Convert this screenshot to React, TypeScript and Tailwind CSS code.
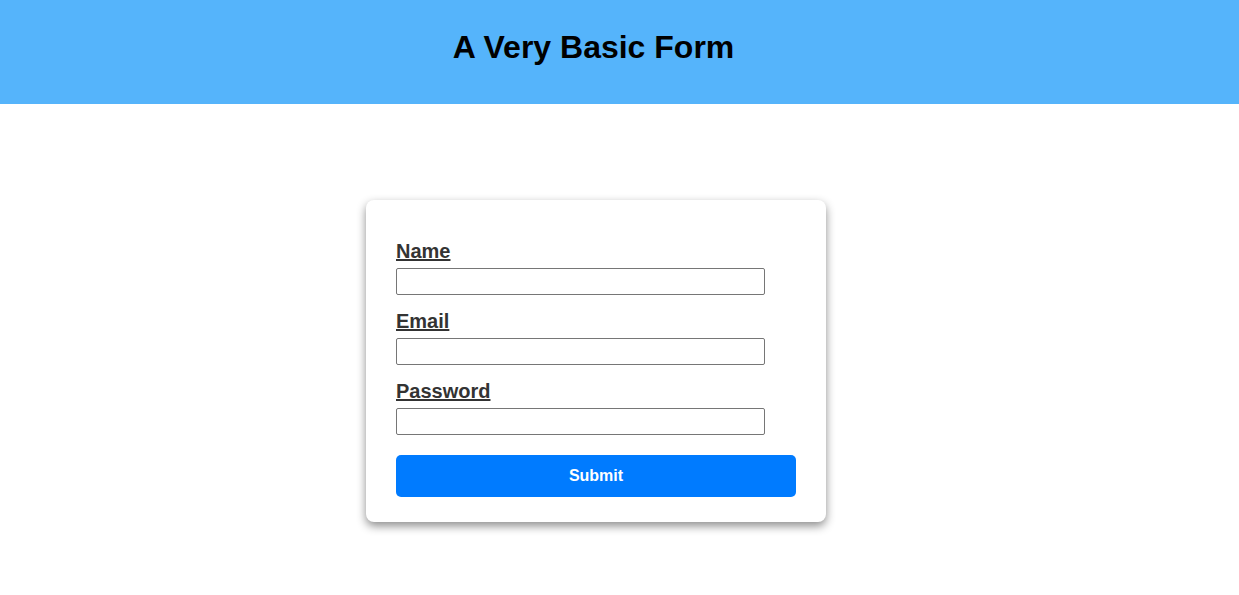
import React from "react";

export default function App() {
  const fields = [
    { label: "Name", type: "text" },
    { label: "Email", type: "email" },
    { label: "Password", type: "password" },
  ];
  return (
    <div className="min-h-[595px] bg-white" style={{ fontFamily: '"Liberation Sans", Arial, sans-serif' }}>
      <header className="h-[104px] bg-[#55b4fb] pt-[29px] pr-[52px]">
        <h1 className="text-center text-[32px] leading-[37px] font-bold text-black">A Very Basic Form</h1>
      </header>
      <main className="flex justify-center pt-[96px] pr-[47px]">
        <form
          className="w-[460px] rounded-[8px] bg-white px-[30px] pt-[40px] pb-[25px] shadow-[0_4px_10px_rgba(0,0,0,0.45)]"
          onSubmit={(e) => e.preventDefault()}
        >
          {fields.map((f) => (
            <div key={f.label} className="mb-[15px]">
              <label className="block text-[20px] leading-[23px] font-bold text-[#333] underline mb-[5px]">
                {f.label}
              </label>
              <input
                type={f.type}
                className="block w-[369px] h-[27px] border border-[#767676] rounded-[2px] bg-white"
              />
            </div>
          ))}
          <button
            type="submit"
            className="mt-[20px] block w-[400px] h-[42px] rounded-[5px] bg-[#007bff] text-white text-[16px] font-bold"
          >
            Submit
          </button>
        </form>
      </main>
    </div>
  );
}
